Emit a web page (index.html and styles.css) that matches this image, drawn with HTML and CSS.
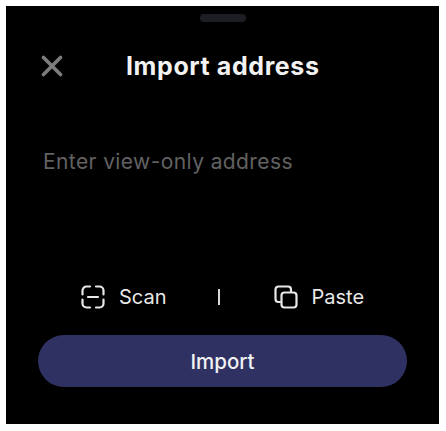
FILE: index.html
```html
<!DOCTYPE html>
<html lang="en">
<head>
  <meta charset="UTF-8">
  <title>Import address</title>
  <link rel="stylesheet" href="styles.css">
</head>
<body>
  <div class="sheet">
    <div class="handle"></div>
    <div class="header">
      <svg class="close" viewBox="0 0 22 22" width="22" height="22">
        <path d="M2.5 2.5L19.5 19.5M19.5 2.5L2.5 19.5" fill="none" stroke="#7d7d7d" stroke-width="3.6" stroke-linecap="round"/>
      </svg>
      <h2 class="title">Import address</h2>
    </div>
    <div class="address">Enter view-only address</div>
    <div class="actions">
      <div class="action action-scan">
        <svg viewBox="0 0 24 24" width="24" height="24">
          <path d="M9 1.5H5.5A4 4 0 0 0 1.5 5.5V9.5M15 1.5H18.5A4 4 0 0 1 22.5 5.5V9.5M9 22.5H5.5A4 4 0 0 1 1.5 18.5V14.5M15 22.5H18.5A4 4 0 0 0 22.5 18.5V14.5M7 12H17" fill="none" stroke="#e8e8e8" stroke-width="2.2" stroke-linecap="round"/>
        </svg>
        <span>Scan</span>
      </div>
      <div class="divider"></div>
      <div class="action action-paste">
        <svg viewBox="0 0 24 24" width="24" height="24">
          <path d="M6 17H4.5A3 3 0 0 1 1.5 14V4.5A3 3 0 0 1 4.5 1.5H14A3 3 0 0 1 17 4.5V6.5" fill="none" stroke="#e8e8e8" stroke-width="2.2" stroke-linecap="round"/>
          <rect x="7.5" y="7.5" width="15" height="15" rx="3" fill="none" stroke="#e8e8e8" stroke-width="2.2"/>
        </svg>
        <span>Paste</span>
      </div>
    </div>
    <button class="btn">Import</button>
  </div>
</body>
</html>
```

FILE: styles.css
```css
html, body {
  margin: 0;
  padding: 0;
  background: #ffffff;
}
body {
  font-family: Inter, "Liberation Sans", sans-serif;
  padding: 6px 7px 7px 6px;
}
.sheet {
  height: 418px;
  background: #000000;
  display: flex;
  flex-direction: column;
  box-sizing: border-box;
  padding: 8px 32px 0 32px;
}
.handle {
  width: 46px;
  height: 8px;
  border-radius: 4px;
  background: #1d1e24;
  align-self: center;
}
.header {
  display: flex;
  align-items: center;
  margin-top: 24px;
  height: 40px;
}
.close {
  margin-left: 3px;
  flex-shrink: 0;
}
.title {
  margin: 0 0 0 63px;
  font-size: 25px;
  font-weight: 700;
  letter-spacing: 0.6px;
  color: #f2f2f2;
}
.address {
  margin-top: 64px;
  margin-left: 5px;
  font-size: 21px;
  line-height: 24px;
  letter-spacing: 0.4px;
  color: #626262;
}
.actions {
  display: flex;
  align-items: center;
  margin-top: 111px;
  height: 24px;
  padding-left: 43px;
  color: #e8e8e8;
  font-size: 20px;
}
.action {
  display: flex;
  align-items: center;
  gap: 14px;
}
.divider {
  width: 2px;
  height: 16px;
  background: #d8d8d8;
  margin: 0 54px 0 51px;
}
.btn {
  margin-top: 26px;
  height: 52px;
  border: none;
  border-radius: 26px;
  background: #2f3163;
  color: #f2f2f2;
  font-family: inherit;
  font-size: 20.5px;
  font-weight: 500;
}
```
